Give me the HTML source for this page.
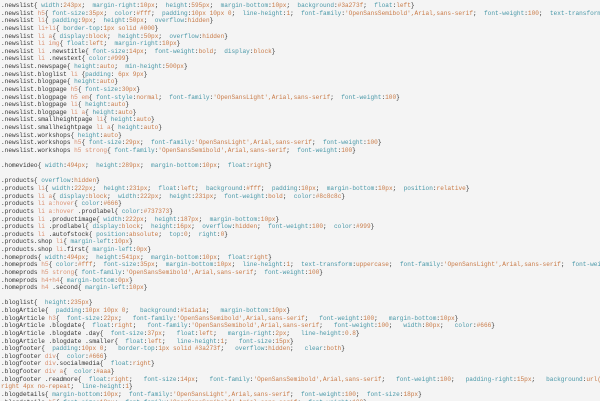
<!DOCTYPE html>
<html><head><meta charset="utf-8"><style>
html,body{margin:0;padding:0;background:#f4f4f4;width:600px;height:401px;overflow:hidden}
pre{margin:0;padding:2px 0 0 1px;font-family:"Liberation Mono",monospace;font-size:6.1px;line-height:7.62px;color:#333;white-space:pre;overflow:hidden;width:600px}
i{font-style:normal;color:#4a98a8}
b{font-weight:normal;color:#c97b48}
u{text-decoration:none;color:#d99070}
</style></head><body><pre>.newslist{ <i>width</i>:<b>243px</b>;  <i>margin-right</i>:<b>10px</b>;  <i>height</i>:<b>595px</b>;  <i>margin-bottom</i>:<b>10px</b>;  <i>background</i>:<b>#3a273f</b>;  <i>float</i>:<b>left</b>}
.newslist <u>h5</u>{ <i>font-size</i>:<b>35px</b>;  <i>color</i>:<b>#fff</b>;  <i>padding</i>:<b>10px 10px 0</b>;  <i>line-height</i>:<b>1</b>;  <i>font-family</i>:<b>'OpenSansSemibold',Arial,sans-serif</b>;  <i>font-weight</i>:<b>100</b>;  <i>text-transform</i>:<b>uppercase</b>}
.newslist <u>li</u>{ <i>padding</i>:<b>9px</b>;  <i>height</i>:<b>50px</b>;  <i>overflow</i>:<b>hidden</b>}
.newslist <u>li+li</u>{ <i>border-top</i>:<b>1px solid #000</b>}
.newslist <u>li a</u>{ <i>display</i>:<b>block</b>;  <i>height</i>:<b>50px</b>;  <i>overflow</i>:<b>hidden</b>}
.newslist <u>li img</u>{ <i>float</i>:<b>left</b>;  <i>margin-right</i>:<b>10px</b>}
.newslist <u>li</u> .newstitle{ <i>font-size</i>:<b>14px</b>;  <i>font-weight</i>:<b>bold</b>;  <i>display</i>:<b>block</b>}
.newslist <u>li</u> .newstext{ <i>color</i>:<b>#999</b>}
.newslist.newspage{ <i>height</i>:<b>auto</b>;  <i>min-height</i>:<b>500px</b>}
.newslist.bloglist <u>li</u> {<i>padding</i>: <b>6px 9px</b>}
.newslist.blogpage{ <i>height</i>:<b>auto</b>}
.newslist.blogpage <u>h5</u>{ <i>font-size</i>:<b>30px</b>}
.newslist.blogpage <u>h5 em</u>{ <i>font-style</i>:<b>normal</b>;  <i>font-family</i>:<b>'OpenSansLight',Arial,sans-serif</b>;  <i>font-weight</i>:<b>100</b>}
.newslist.blogpage <u>li</u>{ <i>height</i>:<b>auto</b>}
.newslist.blogpage <u>li a</u>{ <i>height</i>:<b>auto</b>}
.newslist.smallheightpage <u>li</u>{ <i>height</i>:<b>auto</b>}
.newslist.smallheightpage <u>li a</u>{ <i>height</i>:<b>auto</b>}
.newslist.workshops{ <i>height</i>:<b>auto</b>}
.newslist.workshops <u>h5</u>{ <i>font-size</i>:<b>29px</b>;  <i>font-family</i>:<b>'OpenSansLight',Arial,sans-serif</b>;  <i>font-weight</i>:<b>100</b>}
.newslist.workshops <u>h5 strong</u>{ <i>font-family</i>:<b>'OpenSansSemibold',Arial,sans-serif</b>;  <i>font-weight</i>:<b>100</b>}

.homevideo{ <i>width</i>:<b>494px</b>;  <i>height</i>:<b>289px</b>;  <i>margin-bottom</i>:<b>10px</b>;  <i>float</i>:<b>right</b>}

.products{ <i>overflow</i>:<b>hidden</b>}
.products <u>li</u>{ <i>width</i>:<b>222px</b>;  <i>height</i>:<b>231px</b>;  <i>float</i>:<b>left</b>;  <i>background</i>:<b>#fff</b>;  <i>padding</i>:<b>10px</b>;  <i>margin-bottom</i>:<b>10px</b>;  <i>position</i>:<b>relative</b>}
.products <u>li a</u>{ <i>display</i>:<b>block</b>;  <i>width</i>:<b>222px</b>;  <i>height</i>:<b>231px</b>;  <i>font-weight</i>:<b>bold</b>;  <i>color</i>:<b>#8c8c8c</b>}
.products <u>li a:hover</u>{ <i>color</i>:<b>#666</b>}
.products <u>li a:hover</u> .prodlabel{ <i>color</i>:<b>#737373</b>}
.products <u>li</u> .productimage{ <i>width</i>:<b>222px</b>;  <i>height</i>:<b>187px</b>;  <i>margin-bottom</i>:<b>10px</b>}
.products <u>li</u> .prodlabel{ <i>display</i>:<b>block</b>;  <i>height</i>:<b>16px</b>;  <i>overflow</i>:<b>hidden</b>;  <i>font-weight</i>:<b>100</b>;  <i>color</i>:<b>#999</b>}
.products <u>li</u> .autofstock{ <i>position</i>:<b>absolute</b>;  <i>top</i>:<b>0</b>;  <i>right</i>:<b>0</b>}
.products.shop <u>li</u>{ <i>margin-left</i>:<b>10px</b>}
.products.shop <u>li</u>.first{ <i>margin-left</i>:<b>0px</b>}
.homeprods{ <i>width</i>:<b>494px</b>;  <i>height</i>:<b>541px</b>;  <i>margin-bottom</i>:<b>10px</b>;  <i>float</i>:<b>right</b>}
.homeprods <u>h5</u>{ <i>color</i>:<b>#fff</b>;  <i>font-size</i>:<b>35px</b>;  <i>margin-bottom</i>:<b>10px</b>;  <i>line-height</i>:<b>1</b>;  <i>text-transform</i>:<b>uppercase</b>;  <i>font-family</i>:<b>'OpenSansLight',Arial,sans-serif</b>;  <i>font-weight</i>:<b>100</b>}
.homeprods <u>h5 strong</u>{ <i>font-family</i>:<b>'OpenSansSemibold',Arial,sans-serif</b>;  <i>font-weight</i>:<b>100</b>}
.homeprods <u>h4+h4</u>{ <i>margin-bottom</i>:<b>0px</b>}
.homeprods <u>h4</u> .second{ <i>margin-left</i>:<b>10px</b>}

.bloglist{  <i>height</i>:<b>235px</b>}
.blogArticle{  <i>padding</i>:<b>10px 10px 0</b>;   <i>background</i>:<b>#1a1a1a</b>;   <i>margin-bottom</i>:<b>10px</b>}
.blogArticle <u>h3</u>{  <i>font-size</i>:<b>22px</b>;   <i>font-family</i>:<b>'OpenSansSemibold',Arial,sans-serif</b>;   <i>font-weight</i>:<b>100</b>;   <i>margin-bottom</i>:<b>10px</b>}
.blogArticle .blogdate{  <i>float</i>:<b>right</b>;   <i>font-family</i>:<b>'OpenSansSemibold',Arial,sans-serif</b>;   <i>font-weight</i>:<b>100</b>;   <i>width</i>:<b>80px</b>;   <i>color</i>:<b>#666</b>}
.blogArticle .blogdate .day{  <i>font-size</i>:<b>37px</b>;   <i>float</i>:<b>left</b>;   <i>margin-right</i>:<b>2px</b>;   <i>line-height</i>:<b>0.8</b>}
.blogArticle .blogdate .smaller{  <i>float</i>:<b>left</b>;   <i>line-height</i>:<b>1</b>;   <i>font-size</i>:<b>15px</b>}
.blogfooter{  <i>padding</i>:<b>10px 0</b>;   <i>border-top</i>:<b>1px solid #3a273f</b>;   <i>overflow</i>:<b>hidden</b>;   <i>clear</i>:<b>both</b>}
.blogfooter <u>div</u>{  <i>color</i>:<b>#666</b>}
.blogfooter <u>div</u>.socialmedia{  <i>float</i>:<b>right</b>}
.blogfooter <u>div a</u>{  <i>color</i>:<b>#aaa</b>}
.blogfooter .readmore{  <i>float</i>:<b>right</b>;   <i>font-size</i>:<b>14px</b>;   <i>font-family</i>:<b>'OpenSansSemibold',Arial,sans-serif</b>;   <i>font-weight</i>:<b>100</b>;   <i>padding-right</i>:<b>15px</b>;   <i>background</i>:<b>url('/images/arrow.png')</b>
<b>right 4px no-repeat</b>;  <i>line-height</i>:<b>1</b>}
.blogdetails{ <i>margin-bottom</i>:<b>10px</b>;  <i>font-family</i>:<b>'OpenSansLight',Arial,sans-serif</b>;  <i>font-weight</i>:<b>100</b>;  <i>font-size</i>:<b>18px</b>}
.blogdetails <u>h5</u>{ <i>font-size</i>:<b>18px</b>;  <i>font-family</i>:<b>'OpenSansSemibold',Arial,sans-serif</b>;  <i>font-weight</i>:<b>100</b>}
</pre></body></html>
